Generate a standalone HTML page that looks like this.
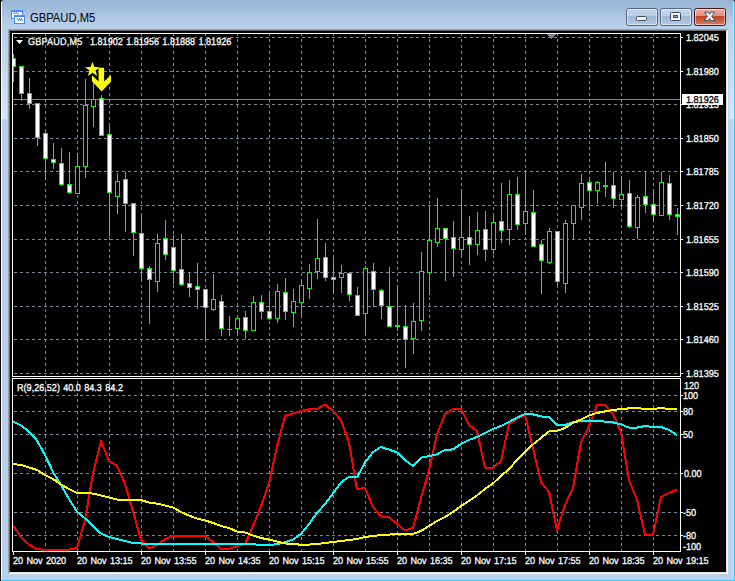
<!DOCTYPE html>
<html><head><meta charset="utf-8"><title>GBPAUD,M5</title>
<style>
html,body{margin:0;padding:0;}
body{width:735px;height:581px;overflow:hidden;position:relative;background:#b9d1ea;font-family:"Liberation Sans",sans-serif;}
.win{position:absolute;left:0;top:0;width:735px;height:581px;background:#b9d1ea;overflow:hidden;}
.tb{position:absolute;left:0;top:0;width:735px;height:31px;background:linear-gradient(#97b3d3 0px,#a3bedd 10px,#b2cbe7 20px,#bad2eb 29px);}
.edgeL{position:absolute;left:0;top:0;width:1px;height:581px;background:#111;}
.edgeL2{position:absolute;left:1px;top:2px;width:1px;height:579px;background:#fafcff;}
.edgeR{position:absolute;left:734px;top:2px;width:1px;height:579px;background:#35c6ea;}
.edgeR2{position:absolute;left:733px;top:2px;width:1px;height:578px;background:#cbdcf0;}
.edgeB{position:absolute;left:1px;top:580px;width:734px;height:1px;background:#35c6ea;}
.sunk{position:absolute;left:8px;top:29px;width:720px;height:545px;background:#fff;box-sizing:border-box;border-left:1px solid #a0a0a0;border-top:1px solid #a0a0a0;}
.sunk2{position:absolute;left:9px;top:30px;width:718px;height:543px;background:#000;box-sizing:border-box;border-left:1px solid #696969;border-top:1px solid #696969;border-right:1px solid #e3e3e3;border-bottom:1px solid #e3e3e3;}
.chart{position:absolute;left:10px;top:31px;}
.title{position:absolute;left:30px;top:11px;font-size:12px;line-height:14px;color:#000;white-space:nowrap;transform-origin:0 0;transform:scaleX(0.935);}
.t{position:absolute;white-space:nowrap;color:#fff;-webkit-text-stroke:0.3px #fff;}
.ax{text-rendering:geometricPrecision;font-size:10px;line-height:12px;word-spacing:0.9px;transform-origin:0 0;transform:scale(0.908,1);}
.bid{color:#000;-webkit-text-stroke:0.3px #000;}
.btn{position:absolute;top:8px;height:18px;width:32px;box-sizing:border-box;border:1px solid #55667d;border-radius:2.5px;box-shadow:inset 0 0 0 1px rgba(255,255,255,.5);}
.b1{left:626px;background:linear-gradient(#c3d5ea 0,#b9cee7 44%,#9cb7d8 47%,#b3cae5 100%);}
.b2{left:660px;background:linear-gradient(#c3d5ea 0,#b9cee7 44%,#9cb7d8 47%,#b3cae5 100%);}
.b3{left:694px;border-color:#4a1622;background:linear-gradient(#e9b0a2 0,#dd8f7e 44%,#c0411f 47%,#d4806a 100%);}
.ico{position:absolute;left:0;top:0;}
.glare{position:absolute;top:30px;height:89px;width:5px;background:linear-gradient(rgba(255,255,255,0),rgba(255,255,255,0.45));}
</style></head><body>
<div class="win">
<div class="tb"></div>
<div class="edgeL"></div><div class="edgeL2"></div><div class="edgeR2"></div><div class="edgeR"></div><div class="edgeB"></div>
<div class="glare" style="left:2px"></div><div class="glare" style="left:729px"></div>
<div class="sunk"></div><div class="sunk2"></div>
<svg class="chart" width="716" height="541" viewBox="10 31 716 541" shape-rendering="crispEdges">
<rect x="10" y="31" width="716" height="541" fill="#000"/>
<line x1="14" x2="680" y1="37.5" y2="37.5" stroke="#778899" stroke-dasharray="3 3"/>
<line x1="14" x2="680" y1="71.5" y2="71.5" stroke="#778899" stroke-dasharray="3 3"/>
<line x1="14" x2="680" y1="104.5" y2="104.5" stroke="#778899" stroke-dasharray="3 3"/>
<line x1="14" x2="680" y1="138.5" y2="138.5" stroke="#778899" stroke-dasharray="3 3"/>
<line x1="14" x2="680" y1="171.5" y2="171.5" stroke="#778899" stroke-dasharray="3 3"/>
<line x1="14" x2="680" y1="205.5" y2="205.5" stroke="#778899" stroke-dasharray="3 3"/>
<line x1="14" x2="680" y1="239.5" y2="239.5" stroke="#778899" stroke-dasharray="3 3"/>
<line x1="14" x2="680" y1="272.5" y2="272.5" stroke="#778899" stroke-dasharray="3 3"/>
<line x1="14" x2="680" y1="306.5" y2="306.5" stroke="#778899" stroke-dasharray="3 3"/>
<line x1="14" x2="680" y1="339.5" y2="339.5" stroke="#778899" stroke-dasharray="3 3"/>
<line x1="14" x2="680" y1="373.5" y2="373.5" stroke="#778899" stroke-dasharray="3 3"/>
<line x1="45.5" x2="45.5" y1="33" y2="376" stroke="#778899" stroke-dasharray="3 3"/>
<line x1="45.5" x2="45.5" y1="381" y2="551" stroke="#778899" stroke-dasharray="3 3"/>
<line x1="77.5" x2="77.5" y1="33" y2="376" stroke="#778899" stroke-dasharray="3 3"/>
<line x1="77.5" x2="77.5" y1="381" y2="551" stroke="#778899" stroke-dasharray="3 3"/>
<line x1="109.5" x2="109.5" y1="33" y2="376" stroke="#778899" stroke-dasharray="3 3"/>
<line x1="109.5" x2="109.5" y1="381" y2="551" stroke="#778899" stroke-dasharray="3 3"/>
<line x1="141.5" x2="141.5" y1="33" y2="376" stroke="#778899" stroke-dasharray="3 3"/>
<line x1="141.5" x2="141.5" y1="381" y2="551" stroke="#778899" stroke-dasharray="3 3"/>
<line x1="173.5" x2="173.5" y1="33" y2="376" stroke="#778899" stroke-dasharray="3 3"/>
<line x1="173.5" x2="173.5" y1="381" y2="551" stroke="#778899" stroke-dasharray="3 3"/>
<line x1="205.5" x2="205.5" y1="33" y2="376" stroke="#778899" stroke-dasharray="3 3"/>
<line x1="205.5" x2="205.5" y1="381" y2="551" stroke="#778899" stroke-dasharray="3 3"/>
<line x1="237.5" x2="237.5" y1="33" y2="376" stroke="#778899" stroke-dasharray="3 3"/>
<line x1="237.5" x2="237.5" y1="381" y2="551" stroke="#778899" stroke-dasharray="3 3"/>
<line x1="269.5" x2="269.5" y1="33" y2="376" stroke="#778899" stroke-dasharray="3 3"/>
<line x1="269.5" x2="269.5" y1="381" y2="551" stroke="#778899" stroke-dasharray="3 3"/>
<line x1="301.5" x2="301.5" y1="33" y2="376" stroke="#778899" stroke-dasharray="3 3"/>
<line x1="301.5" x2="301.5" y1="381" y2="551" stroke="#778899" stroke-dasharray="3 3"/>
<line x1="333.5" x2="333.5" y1="33" y2="376" stroke="#778899" stroke-dasharray="3 3"/>
<line x1="333.5" x2="333.5" y1="381" y2="551" stroke="#778899" stroke-dasharray="3 3"/>
<line x1="365.5" x2="365.5" y1="33" y2="376" stroke="#778899" stroke-dasharray="3 3"/>
<line x1="365.5" x2="365.5" y1="381" y2="551" stroke="#778899" stroke-dasharray="3 3"/>
<line x1="397.5" x2="397.5" y1="33" y2="376" stroke="#778899" stroke-dasharray="3 3"/>
<line x1="397.5" x2="397.5" y1="381" y2="551" stroke="#778899" stroke-dasharray="3 3"/>
<line x1="429.5" x2="429.5" y1="33" y2="376" stroke="#778899" stroke-dasharray="3 3"/>
<line x1="429.5" x2="429.5" y1="381" y2="551" stroke="#778899" stroke-dasharray="3 3"/>
<line x1="461.5" x2="461.5" y1="33" y2="376" stroke="#778899" stroke-dasharray="3 3"/>
<line x1="461.5" x2="461.5" y1="381" y2="551" stroke="#778899" stroke-dasharray="3 3"/>
<line x1="493.5" x2="493.5" y1="33" y2="376" stroke="#778899" stroke-dasharray="3 3"/>
<line x1="493.5" x2="493.5" y1="381" y2="551" stroke="#778899" stroke-dasharray="3 3"/>
<line x1="525.5" x2="525.5" y1="33" y2="376" stroke="#778899" stroke-dasharray="3 3"/>
<line x1="525.5" x2="525.5" y1="381" y2="551" stroke="#778899" stroke-dasharray="3 3"/>
<line x1="557.5" x2="557.5" y1="33" y2="376" stroke="#778899" stroke-dasharray="3 3"/>
<line x1="557.5" x2="557.5" y1="381" y2="551" stroke="#778899" stroke-dasharray="3 3"/>
<line x1="589.5" x2="589.5" y1="33" y2="376" stroke="#778899" stroke-dasharray="3 3"/>
<line x1="589.5" x2="589.5" y1="381" y2="551" stroke="#778899" stroke-dasharray="3 3"/>
<line x1="621.5" x2="621.5" y1="33" y2="376" stroke="#778899" stroke-dasharray="3 3"/>
<line x1="621.5" x2="621.5" y1="381" y2="551" stroke="#778899" stroke-dasharray="3 3"/>
<line x1="653.5" x2="653.5" y1="33" y2="376" stroke="#778899" stroke-dasharray="3 3"/>
<line x1="653.5" x2="653.5" y1="381" y2="551" stroke="#778899" stroke-dasharray="3 3"/>
<line x1="14" x2="680" y1="395.5" y2="395.5" stroke="#778899" stroke-dasharray="3 3"/>
<line x1="14" x2="680" y1="411.5" y2="411.5" stroke="#778899" stroke-dasharray="3 3"/>
<line x1="14" x2="680" y1="434.5" y2="434.5" stroke="#778899" stroke-dasharray="3 3"/>
<line x1="14" x2="680" y1="473.5" y2="473.5" stroke="#778899" stroke-dasharray="3 3"/>
<line x1="14" x2="680" y1="512.5" y2="512.5" stroke="#778899" stroke-dasharray="3 3"/>
<line x1="14" x2="680" y1="535.5" y2="535.5" stroke="#778899" stroke-dasharray="3 3"/>
<line x1="13" x2="681" y1="99.5" y2="99.5" stroke="#778899"/>
<rect x="547" y="34" width="9" height="1" fill="#778899"/>
<rect x="548" y="35" width="7" height="1" fill="#778899"/>
<rect x="549" y="36" width="5" height="1" fill="#778899"/>
<rect x="550" y="37" width="3" height="1" fill="#778899"/>
<rect x="551" y="38" width="1" height="1" fill="#778899"/>
<clipPath id="cm"><rect x="13" y="34" width="667" height="342"/></clipPath><g clip-path="url(#cm)">
<rect x="13" y="54" width="1" height="28" fill="#0f0"/>
<rect x="11" y="58" width="5" height="9" fill="#0f0"/>
<rect x="12" y="59" width="3" height="7" fill="#fff"/>
<rect x="21" y="66" width="1" height="35" fill="#0f0"/>
<rect x="19" y="66" width="5" height="28" fill="#0f0"/>
<rect x="20" y="67" width="3" height="26" fill="#fff"/>
<rect x="29" y="78" width="1" height="31" fill="#0f0"/>
<rect x="27" y="93" width="5" height="11" fill="#0f0"/>
<rect x="28" y="94" width="3" height="9" fill="#fff"/>
<rect x="37" y="103" width="1" height="43" fill="#0f0"/>
<rect x="35" y="103" width="5" height="35" fill="#0f0"/>
<rect x="36" y="104" width="3" height="33" fill="#fff"/>
<rect x="45" y="131" width="1" height="48" fill="#0f0"/>
<rect x="43" y="133" width="5" height="26" fill="#0f0"/>
<rect x="44" y="134" width="3" height="24" fill="#fff"/>
<rect x="53" y="143" width="1" height="26" fill="#0f0"/>
<rect x="51" y="159" width="5" height="4" fill="#0f0"/>
<rect x="52" y="160" width="3" height="2" fill="#fff"/>
<rect x="61" y="148" width="1" height="38" fill="#0f0"/>
<rect x="59" y="163" width="5" height="22" fill="#0f0"/>
<rect x="60" y="164" width="3" height="20" fill="#fff"/>
<rect x="69" y="152" width="1" height="42" fill="#0f0"/>
<rect x="67" y="184" width="5" height="9" fill="#0f0"/>
<rect x="68" y="185" width="3" height="7" fill="#fff"/>
<rect x="77" y="153" width="1" height="41" fill="#0f0"/>
<rect x="75" y="166" width="5" height="28" fill="#0f0"/>
<rect x="76" y="167" width="3" height="26" fill="#000"/>
<rect x="85" y="79" width="1" height="99" fill="#0f0"/>
<rect x="83" y="105" width="5" height="62" fill="#0f0"/>
<rect x="84" y="106" width="3" height="60" fill="#000"/>
<rect x="93" y="82" width="1" height="45" fill="#0f0"/>
<rect x="91" y="99" width="5" height="8" fill="#0f0"/>
<rect x="92" y="100" width="3" height="6" fill="#000"/>
<rect x="101" y="95" width="1" height="41" fill="#0f0"/>
<rect x="99" y="98" width="5" height="38" fill="#0f0"/>
<rect x="100" y="99" width="3" height="36" fill="#fff"/>
<rect x="109" y="126" width="1" height="110" fill="#0f0"/>
<rect x="107" y="134" width="5" height="59" fill="#0f0"/>
<rect x="108" y="135" width="3" height="57" fill="#fff"/>
<rect x="117" y="173" width="1" height="41" fill="#0f0"/>
<rect x="115" y="181" width="5" height="16" fill="#0f0"/>
<rect x="116" y="182" width="3" height="14" fill="#000"/>
<rect x="125" y="172" width="1" height="60" fill="#0f0"/>
<rect x="123" y="179" width="5" height="25" fill="#0f0"/>
<rect x="124" y="180" width="3" height="23" fill="#fff"/>
<rect x="133" y="203" width="1" height="53" fill="#0f0"/>
<rect x="131" y="203" width="5" height="30" fill="#0f0"/>
<rect x="132" y="204" width="3" height="28" fill="#fff"/>
<rect x="141" y="214" width="1" height="66" fill="#0f0"/>
<rect x="139" y="233" width="5" height="36" fill="#0f0"/>
<rect x="140" y="234" width="3" height="34" fill="#fff"/>
<rect x="149" y="266" width="1" height="58" fill="#0f0"/>
<rect x="147" y="268" width="5" height="12" fill="#0f0"/>
<rect x="148" y="269" width="3" height="10" fill="#fff"/>
<rect x="157" y="234" width="1" height="58" fill="#0f0"/>
<rect x="155" y="243" width="5" height="39" fill="#0f0"/>
<rect x="156" y="244" width="3" height="37" fill="#000"/>
<rect x="165" y="220" width="1" height="40" fill="#0f0"/>
<rect x="163" y="238" width="5" height="17" fill="#0f0"/>
<rect x="164" y="239" width="3" height="15" fill="#fff"/>
<rect x="173" y="235" width="1" height="49" fill="#0f0"/>
<rect x="171" y="247" width="5" height="24" fill="#0f0"/>
<rect x="172" y="248" width="3" height="22" fill="#fff"/>
<rect x="181" y="234" width="1" height="52" fill="#0f0"/>
<rect x="179" y="269" width="5" height="16" fill="#0f0"/>
<rect x="180" y="270" width="3" height="14" fill="#fff"/>
<rect x="189" y="273" width="1" height="24" fill="#0f0"/>
<rect x="187" y="283" width="5" height="5" fill="#0f0"/>
<rect x="188" y="284" width="3" height="3" fill="#fff"/>
<rect x="197" y="263" width="1" height="46" fill="#0f0"/>
<rect x="195" y="286" width="5" height="4" fill="#0f0"/>
<rect x="196" y="287" width="3" height="2" fill="#fff"/>
<rect x="205" y="289" width="1" height="51" fill="#0f0"/>
<rect x="203" y="289" width="5" height="19" fill="#0f0"/>
<rect x="204" y="290" width="3" height="17" fill="#fff"/>
<rect x="213" y="274" width="1" height="37" fill="#0f0"/>
<rect x="211" y="299" width="5" height="11" fill="#0f0"/>
<rect x="212" y="300" width="3" height="9" fill="#000"/>
<rect x="221" y="295" width="1" height="41" fill="#0f0"/>
<rect x="219" y="301" width="5" height="28" fill="#0f0"/>
<rect x="220" y="302" width="3" height="26" fill="#fff"/>
<rect x="229" y="316" width="1" height="20" fill="#0f0"/>
<rect x="227" y="329" width="5" height="1" fill="#0f0"/>
<rect x="237" y="315" width="1" height="21" fill="#0f0"/>
<rect x="235" y="318" width="5" height="11" fill="#0f0"/>
<rect x="236" y="319" width="3" height="9" fill="#000"/>
<rect x="245" y="311" width="1" height="28" fill="#0f0"/>
<rect x="243" y="317" width="5" height="14" fill="#0f0"/>
<rect x="244" y="318" width="3" height="12" fill="#fff"/>
<rect x="253" y="296" width="1" height="35" fill="#0f0"/>
<rect x="251" y="302" width="5" height="29" fill="#0f0"/>
<rect x="252" y="303" width="3" height="27" fill="#000"/>
<rect x="261" y="295" width="1" height="24" fill="#0f0"/>
<rect x="259" y="302" width="5" height="10" fill="#0f0"/>
<rect x="260" y="303" width="3" height="8" fill="#fff"/>
<rect x="269" y="291" width="1" height="29" fill="#0f0"/>
<rect x="267" y="311" width="5" height="8" fill="#0f0"/>
<rect x="268" y="312" width="3" height="6" fill="#fff"/>
<rect x="277" y="284" width="1" height="39" fill="#0f0"/>
<rect x="275" y="291" width="5" height="28" fill="#0f0"/>
<rect x="276" y="292" width="3" height="26" fill="#000"/>
<rect x="285" y="278" width="1" height="42" fill="#0f0"/>
<rect x="283" y="292" width="5" height="20" fill="#0f0"/>
<rect x="284" y="293" width="3" height="18" fill="#fff"/>
<rect x="293" y="289" width="1" height="38" fill="#0f0"/>
<rect x="291" y="301" width="5" height="12" fill="#0f0"/>
<rect x="292" y="302" width="3" height="10" fill="#000"/>
<rect x="301" y="280" width="1" height="35" fill="#0f0"/>
<rect x="299" y="285" width="5" height="18" fill="#0f0"/>
<rect x="300" y="286" width="3" height="16" fill="#000"/>
<rect x="309" y="264" width="1" height="35" fill="#0f0"/>
<rect x="307" y="272" width="5" height="17" fill="#0f0"/>
<rect x="308" y="273" width="3" height="15" fill="#000"/>
<rect x="317" y="219" width="1" height="60" fill="#0f0"/>
<rect x="315" y="258" width="5" height="14" fill="#0f0"/>
<rect x="316" y="259" width="3" height="12" fill="#000"/>
<rect x="325" y="243" width="1" height="38" fill="#0f0"/>
<rect x="323" y="257" width="5" height="21" fill="#0f0"/>
<rect x="324" y="258" width="3" height="19" fill="#fff"/>
<rect x="333" y="258" width="1" height="35" fill="#0f0"/>
<rect x="331" y="277" width="5" height="3" fill="#0f0"/>
<rect x="332" y="278" width="3" height="1" fill="#fff"/>
<rect x="341" y="265" width="1" height="28" fill="#0f0"/>
<rect x="339" y="273" width="5" height="5" fill="#0f0"/>
<rect x="340" y="274" width="3" height="3" fill="#000"/>
<rect x="349" y="272" width="1" height="29" fill="#0f0"/>
<rect x="347" y="273" width="5" height="22" fill="#0f0"/>
<rect x="348" y="274" width="3" height="20" fill="#fff"/>
<rect x="357" y="287" width="1" height="29" fill="#0f0"/>
<rect x="355" y="295" width="5" height="21" fill="#0f0"/>
<rect x="356" y="296" width="3" height="19" fill="#fff"/>
<rect x="365" y="266" width="1" height="69" fill="#0f0"/>
<rect x="363" y="268" width="5" height="46" fill="#0f0"/>
<rect x="364" y="269" width="3" height="44" fill="#000"/>
<rect x="373" y="263" width="1" height="44" fill="#0f0"/>
<rect x="371" y="271" width="5" height="19" fill="#0f0"/>
<rect x="372" y="272" width="3" height="17" fill="#fff"/>
<rect x="381" y="289" width="1" height="30" fill="#0f0"/>
<rect x="379" y="290" width="5" height="16" fill="#0f0"/>
<rect x="380" y="291" width="3" height="14" fill="#fff"/>
<rect x="389" y="267" width="1" height="60" fill="#0f0"/>
<rect x="387" y="306" width="5" height="21" fill="#0f0"/>
<rect x="388" y="307" width="3" height="19" fill="#fff"/>
<rect x="397" y="285" width="1" height="46" fill="#0f0"/>
<rect x="395" y="325" width="5" height="2" fill="#0f0"/>
<rect x="405" y="305" width="1" height="63" fill="#0f0"/>
<rect x="403" y="326" width="5" height="14" fill="#0f0"/>
<rect x="404" y="327" width="3" height="12" fill="#fff"/>
<rect x="413" y="303" width="1" height="51" fill="#0f0"/>
<rect x="411" y="321" width="5" height="18" fill="#0f0"/>
<rect x="412" y="322" width="3" height="16" fill="#000"/>
<rect x="421" y="252" width="1" height="79" fill="#0f0"/>
<rect x="419" y="271" width="5" height="50" fill="#0f0"/>
<rect x="420" y="272" width="3" height="48" fill="#000"/>
<rect x="429" y="206" width="1" height="89" fill="#0f0"/>
<rect x="427" y="240" width="5" height="33" fill="#0f0"/>
<rect x="428" y="241" width="3" height="31" fill="#000"/>
<rect x="437" y="198" width="1" height="49" fill="#0f0"/>
<rect x="435" y="228" width="5" height="15" fill="#0f0"/>
<rect x="436" y="229" width="3" height="13" fill="#000"/>
<rect x="445" y="228" width="1" height="53" fill="#0f0"/>
<rect x="443" y="228" width="5" height="11" fill="#0f0"/>
<rect x="444" y="229" width="3" height="9" fill="#fff"/>
<rect x="453" y="221" width="1" height="56" fill="#0f0"/>
<rect x="451" y="237" width="5" height="12" fill="#0f0"/>
<rect x="452" y="238" width="3" height="10" fill="#fff"/>
<rect x="461" y="189" width="1" height="68" fill="#0f0"/>
<rect x="459" y="237" width="5" height="13" fill="#0f0"/>
<rect x="460" y="238" width="3" height="11" fill="#000"/>
<rect x="469" y="216" width="1" height="49" fill="#0f0"/>
<rect x="467" y="237" width="5" height="8" fill="#0f0"/>
<rect x="468" y="238" width="3" height="6" fill="#fff"/>
<rect x="477" y="212" width="1" height="43" fill="#0f0"/>
<rect x="475" y="230" width="5" height="15" fill="#0f0"/>
<rect x="476" y="231" width="3" height="13" fill="#000"/>
<rect x="485" y="211" width="1" height="50" fill="#0f0"/>
<rect x="483" y="229" width="5" height="21" fill="#0f0"/>
<rect x="484" y="230" width="3" height="19" fill="#fff"/>
<rect x="493" y="216" width="1" height="38" fill="#0f0"/>
<rect x="491" y="222" width="5" height="28" fill="#0f0"/>
<rect x="492" y="223" width="3" height="26" fill="#000"/>
<rect x="501" y="183" width="1" height="60" fill="#0f0"/>
<rect x="499" y="221" width="5" height="10" fill="#0f0"/>
<rect x="500" y="222" width="3" height="8" fill="#fff"/>
<rect x="509" y="180" width="1" height="65" fill="#0f0"/>
<rect x="507" y="194" width="5" height="36" fill="#0f0"/>
<rect x="508" y="195" width="3" height="34" fill="#000"/>
<rect x="517" y="177" width="1" height="53" fill="#0f0"/>
<rect x="515" y="194" width="5" height="31" fill="#0f0"/>
<rect x="516" y="195" width="3" height="29" fill="#fff"/>
<rect x="525" y="170" width="1" height="65" fill="#0f0"/>
<rect x="523" y="211" width="5" height="13" fill="#0f0"/>
<rect x="524" y="212" width="3" height="11" fill="#000"/>
<rect x="533" y="190" width="1" height="57" fill="#0f0"/>
<rect x="531" y="212" width="5" height="35" fill="#0f0"/>
<rect x="532" y="213" width="3" height="33" fill="#fff"/>
<rect x="541" y="240" width="1" height="54" fill="#0f0"/>
<rect x="539" y="244" width="5" height="17" fill="#0f0"/>
<rect x="540" y="245" width="3" height="15" fill="#fff"/>
<rect x="549" y="228" width="1" height="36" fill="#0f0"/>
<rect x="547" y="231" width="5" height="32" fill="#0f0"/>
<rect x="548" y="232" width="3" height="30" fill="#000"/>
<rect x="557" y="231" width="1" height="54" fill="#0f0"/>
<rect x="555" y="231" width="5" height="51" fill="#0f0"/>
<rect x="556" y="232" width="3" height="49" fill="#fff"/>
<rect x="565" y="220" width="1" height="73" fill="#0f0"/>
<rect x="563" y="223" width="5" height="61" fill="#0f0"/>
<rect x="564" y="224" width="3" height="59" fill="#000"/>
<rect x="573" y="205" width="1" height="34" fill="#0f0"/>
<rect x="571" y="205" width="5" height="19" fill="#0f0"/>
<rect x="572" y="206" width="3" height="17" fill="#000"/>
<rect x="581" y="174" width="1" height="46" fill="#0f0"/>
<rect x="579" y="183" width="5" height="25" fill="#0f0"/>
<rect x="580" y="184" width="3" height="23" fill="#000"/>
<rect x="589" y="177" width="1" height="34" fill="#0f0"/>
<rect x="587" y="182" width="5" height="9" fill="#0f0"/>
<rect x="588" y="183" width="3" height="7" fill="#fff"/>
<rect x="597" y="181" width="1" height="23" fill="#0f0"/>
<rect x="595" y="182" width="5" height="9" fill="#0f0"/>
<rect x="596" y="183" width="3" height="7" fill="#000"/>
<rect x="605" y="162" width="1" height="35" fill="#0f0"/>
<rect x="603" y="185" width="5" height="2" fill="#0f0"/>
<rect x="613" y="172" width="1" height="36" fill="#0f0"/>
<rect x="611" y="185" width="5" height="14" fill="#0f0"/>
<rect x="612" y="186" width="3" height="12" fill="#fff"/>
<rect x="621" y="176" width="1" height="33" fill="#0f0"/>
<rect x="619" y="194" width="5" height="6" fill="#0f0"/>
<rect x="620" y="195" width="3" height="4" fill="#000"/>
<rect x="629" y="180" width="1" height="48" fill="#0f0"/>
<rect x="627" y="193" width="5" height="34" fill="#0f0"/>
<rect x="628" y="194" width="3" height="32" fill="#fff"/>
<rect x="637" y="195" width="1" height="44" fill="#0f0"/>
<rect x="635" y="197" width="5" height="31" fill="#0f0"/>
<rect x="636" y="198" width="3" height="29" fill="#000"/>
<rect x="645" y="172" width="1" height="41" fill="#0f0"/>
<rect x="643" y="196" width="5" height="9" fill="#0f0"/>
<rect x="644" y="197" width="3" height="7" fill="#fff"/>
<rect x="653" y="189" width="1" height="32" fill="#0f0"/>
<rect x="651" y="204" width="5" height="11" fill="#0f0"/>
<rect x="652" y="205" width="3" height="9" fill="#fff"/>
<rect x="661" y="172" width="1" height="44" fill="#0f0"/>
<rect x="659" y="182" width="5" height="34" fill="#0f0"/>
<rect x="660" y="183" width="3" height="32" fill="#000"/>
<rect x="669" y="175" width="1" height="45" fill="#0f0"/>
<rect x="667" y="183" width="5" height="32" fill="#0f0"/>
<rect x="668" y="184" width="3" height="30" fill="#fff"/>
<rect x="677" y="208" width="1" height="27" fill="#0f0"/>
<rect x="675" y="214" width="5" height="3" fill="#0f0"/>
<rect x="676" y="215" width="3" height="1" fill="#fff"/>
</g>
<g shape-rendering="auto" fill="#ff0">
<polygon points="92.5,61.8 94.4,67.0 99.9,67.2 95.6,70.6 97.1,75.9 92.5,72.8 87.9,75.9 89.4,70.6 85.1,67.2 90.6,67.0"/>
<polygon points="98.6,67.7 104.1,67.7 104.1,81.5 111,75 111,81.5 101.7,91.5 92,81.2 92,75.3 98.6,81.5"/>
</g>
<polyline points="13,525.0 21,537.4 29,544.4 37,549.4 45,549.6 53,549.6 61,549.6 69,549.6 77,548.0 85,520.0 93,473.0 101,441.0 109,461.0 117,465.6 125,484.0 133,511.0 141,540.0 149,548.4 157,545.0 165,539.0 173,536.0 181,536.0 189,536.0 197,536.0 205,536.0 213,542.0 221,549.0 229,549.0 237,546.0 245,544.0 253,526.0 261,506.0 269,483.0 277,446.5 285,416.0 293,413.6 301,411.0 309,409.4 317,409.0 325,404.4 333,411.0 341,420.0 349,442.5 357,489.3 365,487.8 373,507.0 381,516.4 389,517.0 397,524.0 405,530.4 413,528.0 421,498.0 429,470.5 437,434.0 445,414.0 453,409.0 461,409.0 469,425.0 477,431.0 485,467.6 493,467.6 501,461.0 509,424.0 517,419.0 525,415.0 533,448.0 541,482.0 549,492.0 557,530.0 565,505.0 573,488.0 581,442.0 589,426.0 597,405.0 605,405.0 613,414.0 621,432.0 629,480.0 637,500.0 645,534.6 653,534.6 661,497.0 669,493.0 677,489.6" fill="none" stroke="#f00" stroke-width="2" stroke-linejoin="round" shape-rendering="crispEdges"/>
<polyline points="13,421.6 21,425.6 29,431.6 37,440.5 45,455.0 53,472.0 61,485.0 69,499.0 77,511.6 85,518.4 93,526.0 101,533.6 109,537.0 117,539.0 125,541.0 133,543.0 141,543.4 149,544.0 157,544.0 165,544.0 173,544.0 181,544.0 189,544.0 197,544.0 205,544.0 213,544.0 221,544.0 229,544.0 237,544.0 245,544.0 253,544.0 261,545.4 269,545.4 277,544.0 285,542.4 293,539.5 301,534.0 309,524.0 317,513.0 325,504.0 333,493.5 341,482.5 349,476.7 357,477.4 365,462.5 373,452.2 381,447.0 389,449.6 397,452.4 405,460.0 413,466.0 421,457.7 429,456.2 437,454.2 445,450.0 453,449.4 461,444.0 469,440.0 477,437.0 485,433.0 493,429.0 501,426.0 509,422.0 517,417.6 525,414.0 533,414.4 541,416.4 549,417.0 557,425.0 565,425.0 573,422.4 581,421.0 589,421.0 597,421.0 605,421.6 613,422.4 621,424.4 629,427.6 637,427.6 645,426.0 653,427.0 661,427.0 669,430.0 677,435.0" fill="none" stroke="#0ff" stroke-width="2" stroke-linejoin="round" shape-rendering="crispEdges"/>
<polyline points="13,464.0 21,465.0 29,467.4 37,470.0 45,475.0 53,479.0 61,484.4 69,489.0 77,493.0 85,493.0 93,493.6 101,495.6 109,497.6 117,499.6 125,499.6 133,499.6 141,500.0 149,502.6 157,503.6 165,505.6 173,507.4 181,512.0 189,515.6 197,518.6 205,520.4 213,523.0 221,526.0 229,528.0 237,531.6 245,532.4 253,535.6 261,538.0 269,539.6 277,541.6 285,543.4 293,544.3 301,544.6 309,544.6 317,544.0 325,543.0 333,542.0 341,541.0 349,540.0 357,539.0 365,537.0 373,536.0 381,535.0 389,534.6 397,534.0 405,534.0 413,534.0 421,531.0 429,526.0 437,521.0 445,517.0 453,512.0 461,506.0 469,501.0 477,495.4 485,489.0 493,483.4 501,476.0 509,469.0 517,460.0 525,452.4 533,444.4 541,438.0 549,431.4 557,431.0 565,428.0 573,423.0 581,419.4 589,415.4 597,413.0 605,411.4 613,410.0 621,409.0 629,408.4 637,408.0 645,409.0 653,409.0 661,408.0 669,409.0 677,409.5" fill="none" stroke="#ff0" stroke-width="2" stroke-linejoin="round" shape-rendering="crispEdges"/>
<rect x="12.5" y="33.5" width="668" height="343" fill="none" stroke="#fff"/>
<rect x="12.5" y="378.5" width="668" height="173" fill="none" stroke="#fff"/>
<rect x="681" y="37" width="2" height="1" fill="#fff"/>
<rect x="681" y="71" width="2" height="1" fill="#fff"/>
<rect x="681" y="104" width="2" height="1" fill="#fff"/>
<rect x="681" y="138" width="2" height="1" fill="#fff"/>
<rect x="681" y="171" width="2" height="1" fill="#fff"/>
<rect x="681" y="205" width="2" height="1" fill="#fff"/>
<rect x="681" y="239" width="2" height="1" fill="#fff"/>
<rect x="681" y="272" width="2" height="1" fill="#fff"/>
<rect x="681" y="306" width="2" height="1" fill="#fff"/>
<rect x="681" y="339" width="2" height="1" fill="#fff"/>
<rect x="681" y="373" width="2" height="1" fill="#fff"/>
<rect x="681" y="395" width="2" height="1" fill="#fff"/>
<rect x="681" y="411" width="2" height="1" fill="#fff"/>
<rect x="681" y="434" width="2" height="1" fill="#fff"/>
<rect x="681" y="473" width="2" height="1" fill="#fff"/>
<rect x="681" y="512" width="2" height="1" fill="#fff"/>
<rect x="681" y="535" width="2" height="1" fill="#fff"/>
<rect x="13" y="552" width="1" height="3" fill="#fff"/>
<rect x="77" y="552" width="1" height="3" fill="#fff"/>
<rect x="141" y="552" width="1" height="3" fill="#fff"/>
<rect x="205" y="552" width="1" height="3" fill="#fff"/>
<rect x="269" y="552" width="1" height="3" fill="#fff"/>
<rect x="333" y="552" width="1" height="3" fill="#fff"/>
<rect x="397" y="552" width="1" height="3" fill="#fff"/>
<rect x="461" y="552" width="1" height="3" fill="#fff"/>
<rect x="525" y="552" width="1" height="3" fill="#fff"/>
<rect x="589" y="552" width="1" height="3" fill="#fff"/>
<rect x="653" y="552" width="1" height="3" fill="#fff"/>
<polygon points="16,40 23,40 19.5,44" fill="#fff" shape-rendering="auto"/>
<rect x="682" y="94" width="41" height="11" fill="#fff"/>
</svg>
<span class="t ax" style="left:686px;top:33px">1.82045</span>
<span class="t ax" style="left:686px;top:67px">1.81980</span>
<span class="t ax" style="left:686px;top:100px">1.81915</span>
<span class="t ax" style="left:686px;top:134px">1.81850</span>
<span class="t ax" style="left:686px;top:167px">1.81785</span>
<span class="t ax" style="left:686px;top:201px">1.81720</span>
<span class="t ax" style="left:686px;top:235px">1.81655</span>
<span class="t ax" style="left:686px;top:268px">1.81590</span>
<span class="t ax" style="left:686px;top:302px">1.81525</span>
<span class="t ax" style="left:686px;top:335px">1.81460</span>
<span class="t ax" style="left:686px;top:369px">1.81395</span>
<span class="t ax" style="left:683.5px;top:381px">120</span>
<span class="t ax" style="left:682.5px;top:391px">100</span>
<span class="t ax" style="left:683px;top:407px">80</span>
<span class="t ax" style="left:683px;top:430px">50</span>
<span class="t ax" style="left:684px;top:469px">0.00</span>
<span class="t ax" style="left:683.3px;top:508px">-50</span>
<span class="t ax" style="left:683.3px;top:531px">-80</span>
<span class="t ax" style="left:683.3px;top:542px">-100</span>
<span class="t ax" style="left:13px;top:556px">20 Nov 2020</span>
<span class="t ax" style="left:77px;top:556px">20 Nov 13:15</span>
<span class="t ax" style="left:141px;top:556px">20 Nov 13:55</span>
<span class="t ax" style="left:205px;top:556px">20 Nov 14:35</span>
<span class="t ax" style="left:269px;top:556px">20 Nov 15:15</span>
<span class="t ax" style="left:333px;top:556px">20 Nov 15:55</span>
<span class="t ax" style="left:397px;top:556px">20 Nov 16:35</span>
<span class="t ax" style="left:461px;top:556px">20 Nov 17:15</span>
<span class="t ax" style="left:525px;top:556px">20 Nov 17:55</span>
<span class="t ax" style="left:589px;top:556px">20 Nov 18:35</span>
<span class="t ax" style="left:653px;top:556px">20 Nov 19:15</span>
<span class="t ax" style="left:28px;top:37px;letter-spacing:0.2px">GBPAUD,M5</span>
<span class="t ax" style="left:90px;top:37px">1.81902 1.81956 1.81888 1.81926</span>
<span class="t ax" style="left:17px;top:383px">R(9,26,52) 40.0 84.3 84.2</span>
<span class="t ax bid" style="left:686px;top:95px">1.81926</span>
<div class="title">GBPAUD,M5</div>
<div class="btn b1"></div><div class="btn b2"></div><div class="btn b3"></div>
<svg class="ico" width="735" height="31" viewBox="0 0 735 31">
<g shape-rendering="crispEdges">
<rect x="11.5" y="10.5" width="11" height="8" fill="#fff" stroke="#4a86f7"/>
<rect x="12" y="11" width="10" height="1" fill="#4a86f7"/>
<rect x="13" y="10" width="1" height="1" fill="#5cc08a"/><rect x="15" y="10" width="1" height="1" fill="#5cc08a"/><rect x="17" y="10" width="1" height="1" fill="#5cc08a"/><rect x="19" y="10" width="1" height="1" fill="#5cc08a"/><rect x="21" y="10" width="1" height="1" fill="#5cc08a"/>
<rect x="14.5" y="15.5" width="10" height="8" fill="#fff" stroke="#4a86f7"/>
<rect x="15" y="16" width="9" height="1" fill="#4a86f7"/>
<rect x="16" y="15" width="1" height="1" fill="#5cc08a"/><rect x="18" y="15" width="1" height="1" fill="#5cc08a"/><rect x="20" y="15" width="1" height="1" fill="#5cc08a"/><rect x="22" y="15" width="1" height="1" fill="#5cc08a"/>
</g>
<polyline points="16.5,18.5 17.5,18.5 18.5,20.8 19.5,18.5 20.5,20.8 21.5,18.5 22.5,20.8" fill="none" stroke="#3a78f0" stroke-width="1"/>
<polyline points="13.2,13.8 14.5,12.6 15.5,13.8 16.5,12.6 17.5,13.8 18.8,13.8" fill="none" stroke="#3a78f0" stroke-width="1"/>
<!-- minimize -->
<rect x="636.5" y="16.5" width="10" height="4" fill="#f4f4f4" stroke="#3f4b61" rx="1"/>
<!-- restore -->
<rect x="670.5" y="12.5" width="10" height="8" fill="#f4f4f4" stroke="#3f4b61" rx="1"/>
<rect x="673.5" y="15.5" width="4" height="2" fill="#7f9cc2" stroke="#3f4b61" stroke-width="1"/>
<!-- close X -->
<path d="M704.6 12.2 L708.3 12.2 L709.6 14.3 L710.9 12.2 L714.6 12.2 L711.7 16.3 L714.9 20.5 L711 20.5 L709.6 18.3 L708.2 20.5 L704.3 20.5 L707.5 16.3 Z" fill="#fff" stroke="#475269" stroke-width="1" stroke-linejoin="round"/>
<!-- corners -->
<path d="M0 0 L3 0 L1.2 1.2 L1 3 L0 3 Z" fill="#111"/>
<path d="M735 0 L733 0 L734.3 0.7 L735 2 Z" fill="#111"/>
</svg>
</div>
</body></html>
